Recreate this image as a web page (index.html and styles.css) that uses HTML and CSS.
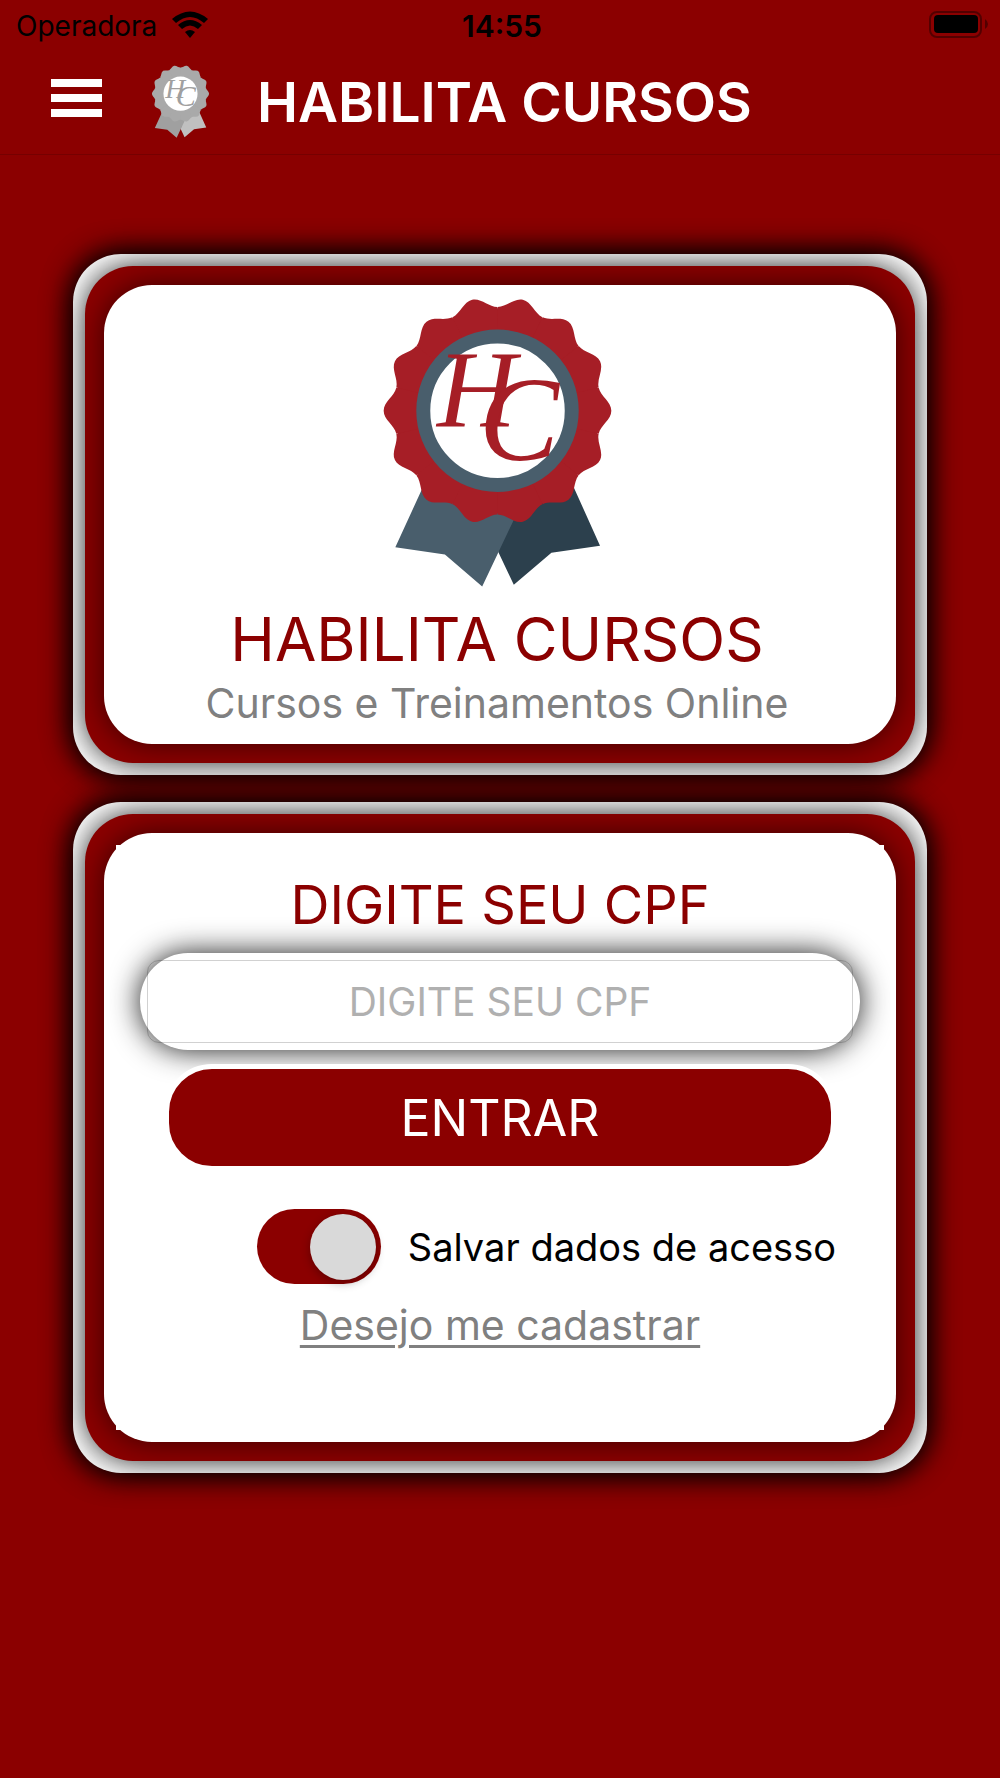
FILE: index.html
```html
<!DOCTYPE html>
<html lang="pt-BR">
<head>
  <meta charset="UTF-8" />
  <title>Habilita Cursos</title>
  <meta name="viewport" content="width=device-width, initial-scale=1.0" />
  <link rel="stylesheet" href="styles.css">
</head>
<body>
  <!-- shared medal shapes -->
  <svg class="defs" width="0" height="0" aria-hidden="true">
    <defs>
      <path id="petal" d="M0 0 L304 -69 C310 -43 342 -27 342 0 C342 27 310 43 304 69 Z" />
      <g id="wreath">
        <circle r="308" />
        <use href="#petal" />
        <use href="#petal" transform="rotate(25.714)" />
        <use href="#petal" transform="rotate(51.429)" />
        <use href="#petal" transform="rotate(77.143)" />
        <use href="#petal" transform="rotate(102.857)" />
        <use href="#petal" transform="rotate(128.571)" />
        <use href="#petal" transform="rotate(154.286)" />
        <use href="#petal" transform="rotate(180)" />
        <use href="#petal" transform="rotate(205.714)" />
        <use href="#petal" transform="rotate(231.429)" />
        <use href="#petal" transform="rotate(257.143)" />
        <use href="#petal" transform="rotate(282.857)" />
        <use href="#petal" transform="rotate(308.571)" />
        <use href="#petal" transform="rotate(334.286)" />
      </g>
      <path id="ribbon-left" d="M-226 234 L-307 410 L-158 432 L-46 528 L46 334 L70 280 L0 200 Z" />
      <path id="ribbon-right" d="M230 232 L308 406 L162 427 L49 523 L2 424 L40 280 L60 200 Z" />
    </defs>
  </svg>

  <div class="statusbar">
    <div class="carrier">
      <span>Operadora</span>
      <svg class="wifi" viewBox="0 0 36 27" aria-hidden="true">
        <path d="M0 8 Q18 -7 36 8 L32 12 Q18 0 4 12 Z" />
        <path d="M6 14 Q18 4 30 14 L26 18 Q18 11 10 18 Z" />
        <path d="M13 21 Q18 17 23 21 L18 27 Z" />
      </svg>
    </div>
    <span class="clock">14:55</span>
    <svg class="battery" viewBox="0 0 59 27" aria-hidden="true">
      <rect class="battery-case" x="1" y="1" width="51" height="25" rx="7" />
      <rect x="5" y="4" width="44" height="18" rx="4" />
      <path class="battery-tip" d="M56 8 Q59 10 59 13 Q59 16 56 18 Z" />
    </svg>
  </div>

  <header class="topbar">
    <button class="menu" type="button" aria-label="Menu">
      <span></span><span></span><span></span>
    </button>
    <svg class="medal-small" viewBox="-341 -341 682 870" aria-hidden="true">
      <use href="#ribbon-right" fill="#c0c0c0" />
      <use href="#ribbon-left" fill="#a0a0a0" />
      <use href="#wreath" fill="#a9a9a9" />
      <circle r="204" fill="#fff" />
      <text class="monogram" x="-182" y="50" fill="#a0a0a0">H<tspan class="big" dx="-112" dy="98">C</tspan></text>
    </svg>
    <h1>HABILITA CURSOS</h1>
  </header>

  <main>
    <section class="frame">
      <div class="ring">
        <div class="panel brand">
          <svg class="medal" viewBox="-341 -341 682 870" role="img" aria-label="Habilita Cursos">
            <use href="#ribbon-right" fill="#2c404d" />
            <use href="#ribbon-left" fill="#495e6c" />
            <use href="#wreath" fill="#a61e26" />
            <circle r="223" fill="#fff" stroke="#495e6c" stroke-width="42" />
            <text class="monogram" x="-182" y="50" fill="#a61e26">H<tspan class="big" dx="-112" dy="98">C</tspan></text>
          </svg>
          <h2>HABILITA CURSOS</h2>
          <p>Cursos e Treinamentos Online</p>
        </div>
      </div>
    </section>

    <section class="frame">
      <div class="ring">
        <div class="panel">
          <form class="login">
            <label class="login-title" for="cpf">DIGITE SEU CPF</label>
            <div class="field">
              <input type="text" id="cpf" inputmode="numeric" placeholder="DIGITE SEU CPF" />
            </div>
            <button class="enter" type="submit">ENTRAR</button>
            <div class="save">
              <input class="switch" type="checkbox" id="save" checked />
              <label for="save">Salvar dados de acesso</label>
            </div>
            <a class="signup" href="#">Desejo me cadastrar</a>
          </form>
        </div>
      </div>
    </section>
  </main>
</body>
</html>
```

FILE: styles.css
```css
* {
  box-sizing: border-box;
}
body {
  margin: 0;
  min-height: 100vh;
  background-color: #8b0000;
  font-family: Inter, "Liberation Sans", sans-serif;
  color: #000;
}
h1, h2, p {
  margin: 0;
  font-weight: 400;
}
.defs {
  position: absolute;
}

/* status bar */
.statusbar {
  display: grid;
  grid-template-columns: 1fr auto 1fr;
  align-items: center;
  height: 48px;
  padding: 0 12px 0 16px;
  font-size: 28px;
}
.statusbar span {
  padding-top: 3px;
}
.carrier {
  display: flex;
  align-items: center;
  gap: 15px;
}
.wifi {
  width: 36px;
  height: 27px;
}
.clock {
  font-size: 30px;
  font-weight: 600;
}
.battery {
  width: 59px;
  height: 27px;
  justify-self: end;
}
.battery-case {
  fill: none;
  stroke: #000;
  stroke-width: 2;
  opacity: 0.4;
}
.battery-tip {
  opacity: 0.4;
}

/* title bar */
.topbar {
  display: flex;
  align-items: center;
  height: 107px;
  padding: 0 51px;
  border-bottom: 1px solid #760000;
}
.menu {
  display: flex;
  flex-direction: column;
  gap: 7px;
  width: 51px;
  padding: 0 0 7px;
  border: none;
  background: none;
  cursor: pointer;
}
.menu span {
  height: 8px;
  background: #fff;
}
.medal-small {
  width: 57px;
  height: 73px;
  margin: 0 48px 0 50px;
  overflow: visible;
}
.topbar h1 {
  padding-top: 2px;
  font-size: 55px;
  font-weight: 600;
  color: #fff;
}
.monogram {
  font-family: "Liberation Serif", serif;
  font-style: italic;
  font-size: 330px;
}
.monogram .big {
  font-size: 360px;
}

/* framed cards */
main {
  display: flex;
  flex-direction: column;
  gap: 27px;
  padding: 99px 73px;
}
.frame {
  padding: 12px;
  border-radius: 48px;
  background: #fff;
  box-shadow: 0 0 30px #000, 0 0 30px rgba(0, 0, 0, 0.6);
}
.ring {
  padding: 19px;
  border-radius: 48px;
  background: #8b0000;
  box-shadow: 0 0 30px rgba(0, 0, 0, 0.8);
}
.panel {
  padding: 12px;
  border-radius: 48px;
  background: #fff;
  box-shadow: 0 0 30px rgba(0, 0, 0, 0.6);
}
.brand {
  display: flex;
  flex-direction: column;
  align-items: center;
  padding-right: 18px;
  text-align: center;
}
.medal {
  width: 227px;
  height: 290px;
  overflow: visible;
}
.brand h2 {
  margin-top: 16px;
  font-size: 60px;
  line-height: 72px;
  color: #8b0000;
}
.brand p {
  font-size: 41px;
  line-height: 57px;
  color: #808080;
}

/* login form */
.login {
  display: flex;
  flex-direction: column;
  align-items: center;
  padding: 28px 24px 80px;
  background: #fff;
}
.login-title {
  font-size: 54px;
  line-height: 64px;
  color: #8b0000;
}
.field {
  align-self: stretch;
  margin-top: 16px;
  padding: 7px;
  border-radius: 48px;
  background: #fff;
  box-shadow: 0 0 30px rgba(0, 0, 0, 0.9);
}
.field input {
  display: block;
  width: 100%;
  height: 83px;
  padding: 0;
  border: 1px solid rgba(0, 0, 0, 0.18);
  border-radius: 12px;
  background: transparent;
  font: inherit;
  font-size: 39px;
  text-align: center;
}
.field input::placeholder {
  color: #b0b0b0;
  opacity: 1;
}
.enter {
  align-self: stretch;
  height: 107px;
  margin: 14px 24px 0;
  padding: 0;
  border: 5px solid #fff;
  border-radius: 48px;
  background: #8b0000;
  color: #fff;
  font: inherit;
  font-size: 50px;
  cursor: pointer;
}
.save {
  display: flex;
  align-self: stretch;
  align-items: center;
  justify-content: flex-end;
  gap: 27px;
  margin: 38px 24px 0;
  font-size: 38px;
}
.switch {
  appearance: none;
  display: flex;
  align-items: center;
  width: 124px;
  height: 75px;
  margin: 0;
  padding: 0 5px;
  border-radius: 38px;
  background: #8b0000;
  cursor: pointer;
}
.switch::before {
  content: "";
  width: 66px;
  height: 66px;
  border-radius: 50%;
  background: #d9d9d9;
  box-shadow: 0 3px 10px rgba(0, 0, 0, 0.3);
}
.switch:checked::before {
  margin-left: auto;
}
.signup {
  margin-top: 16px;
  font-size: 41px;
  line-height: 50px;
  color: #808080;
  text-decoration-thickness: 3px;
  text-underline-offset: 5px;
}
```
